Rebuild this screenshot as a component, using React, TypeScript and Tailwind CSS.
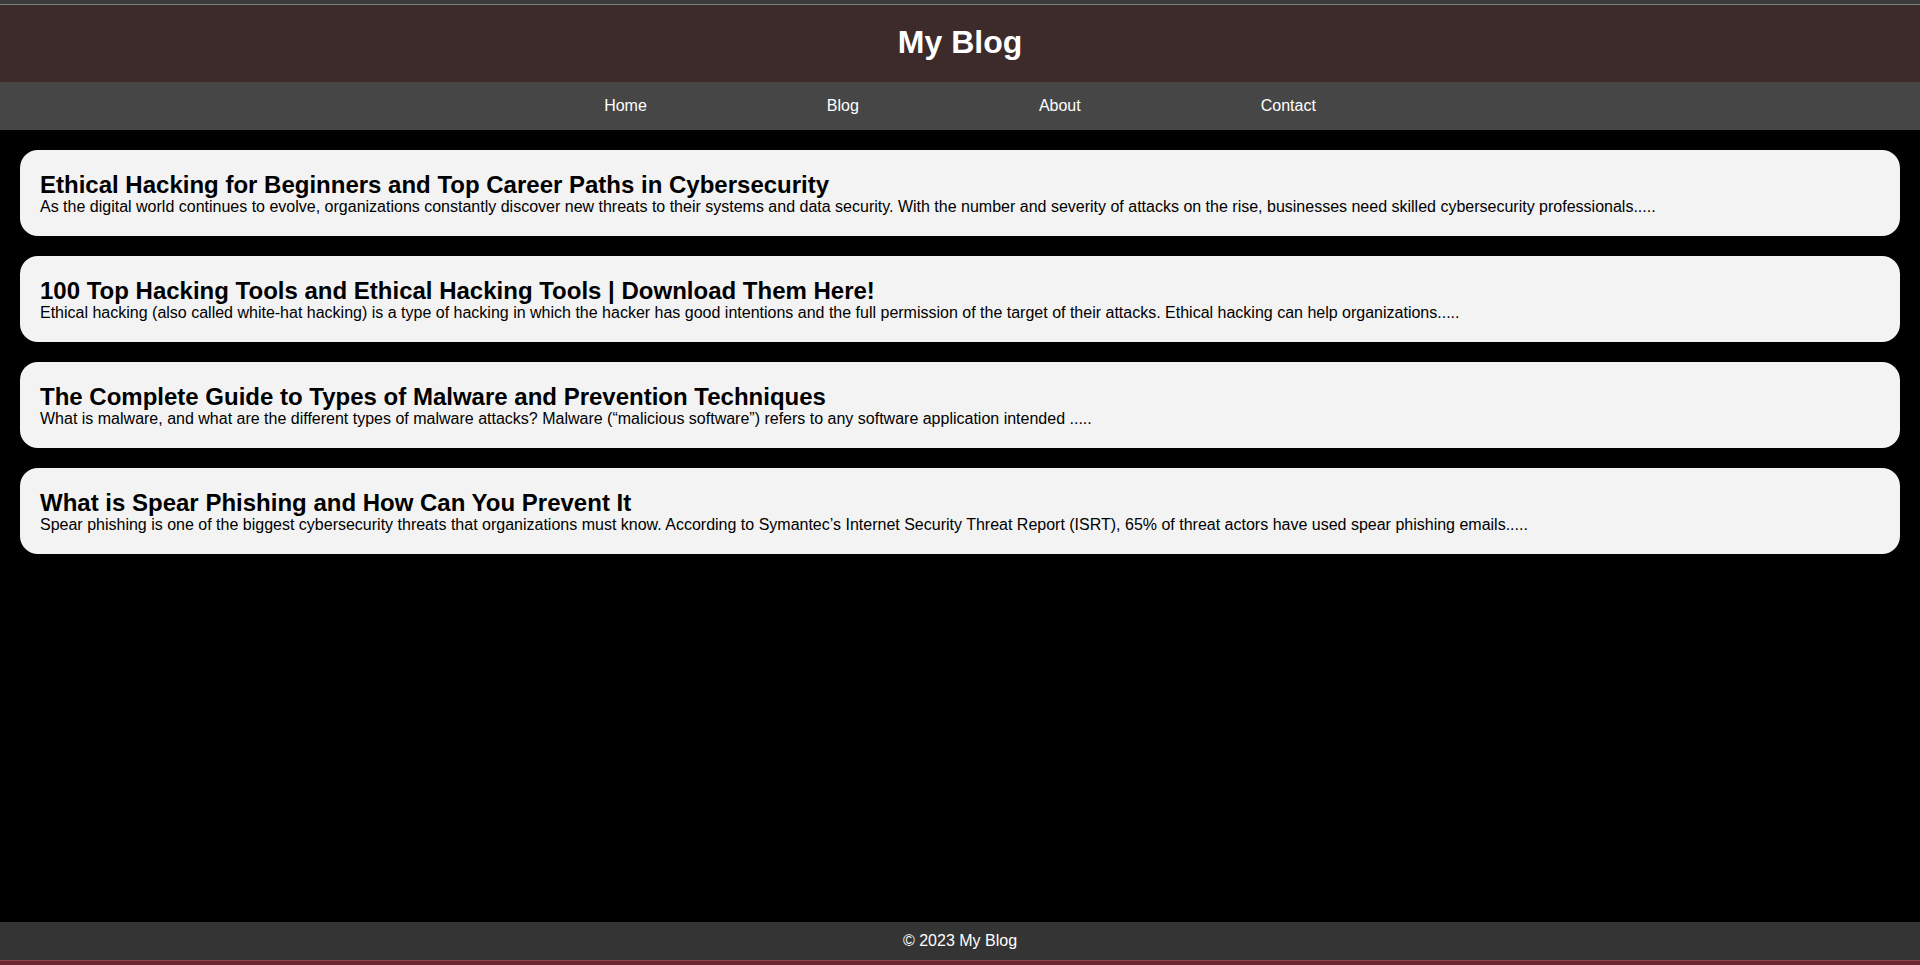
import React, { FC } from "react";

interface IPostCardProps {
  title: string;
  excerpt: string;
}

const posts: IPostCardProps[] = [
  {
    title: "Ethical Hacking for Beginners and Top Career Paths in Cybersecurity",
    excerpt:
      "As the digital world continues to evolve, organizations constantly discover new threats to their systems and data security. With the number and severity of attacks on the rise, businesses need skilled cybersecurity professionals.....",
  },
  {
    title: "100 Top Hacking Tools and Ethical Hacking Tools | Download Them Here!",
    excerpt:
      "Ethical hacking (also called white-hat hacking) is a type of hacking in which the hacker has good intentions and the full permission of the target of their attacks. Ethical hacking can help organizations.....",
  },
  {
    title: "The Complete Guide to Types of Malware and Prevention Techniques",
    excerpt:
      "What is malware, and what are the different types of malware attacks? Malware (\u201Cmalicious software\u201D) refers to any software application intended .....",
  },
  {
    title: "What is Spear Phishing and How Can You Prevent It",
    excerpt:
      "Spear phishing is one of the biggest cybersecurity threats that organizations must know. According to Symantec\u2019s Internet Security Threat Report (ISRT), 65% of threat actors have used spear phishing emails.....",
  },
];

const navLinks = ["Home", "Blog", "About", "Contact"];

const PostCard: FC<IPostCardProps> = ({ title, excerpt }) => {
  return (
    <article className="bg-[#f3f3f3] rounded-[18px] h-[86px] px-5 pt-[21px] text-black">
      <h2 className="text-[24px] font-bold leading-[27px]">{title}</h2>
      <p className="text-[16px] leading-[18px]">{excerpt}</p>
    </article>
  );
};

const App: FC = () => {
  return (
    <div className="min-h-screen flex flex-col bg-black font-['Liberation_Sans',Arial,sans-serif]">
      <div className="h-[4px] bg-[#3b3b3b]" />
      <div className="h-[1px] bg-[#7d7d7d]" />
      <header className="h-[77px] bg-[#3d2a2b] pt-[19px] text-center">
        <h1 className="text-[32px] font-bold leading-[37px] text-white">My Blog</h1>
      </header>
      <nav className="h-[48px] bg-[#464646] pt-[15px]">
        <ul className="flex justify-center gap-[180px] text-white text-[16px] leading-[18px]">
          {navLinks.map((link) => (
            <li key={link}>
              <a href="#">{link}</a>
            </li>
          ))}
        </ul>
      </nav>
      <main className="flex-1 flex flex-col gap-[20px] px-5 pt-5">
        {posts.map((post) => (
          <PostCard key={post.title} {...post} />
        ))}
      </main>
      <footer className="h-[38px] bg-[#343434] pt-[10px] text-center text-white text-[16px] leading-[18px]">
        &copy; 2023 My Blog
      </footer>
      <div className="h-[5px] bg-[#6b2630] border-t border-[#8a4a50]" />
    </div>
  );
};

export default App;
